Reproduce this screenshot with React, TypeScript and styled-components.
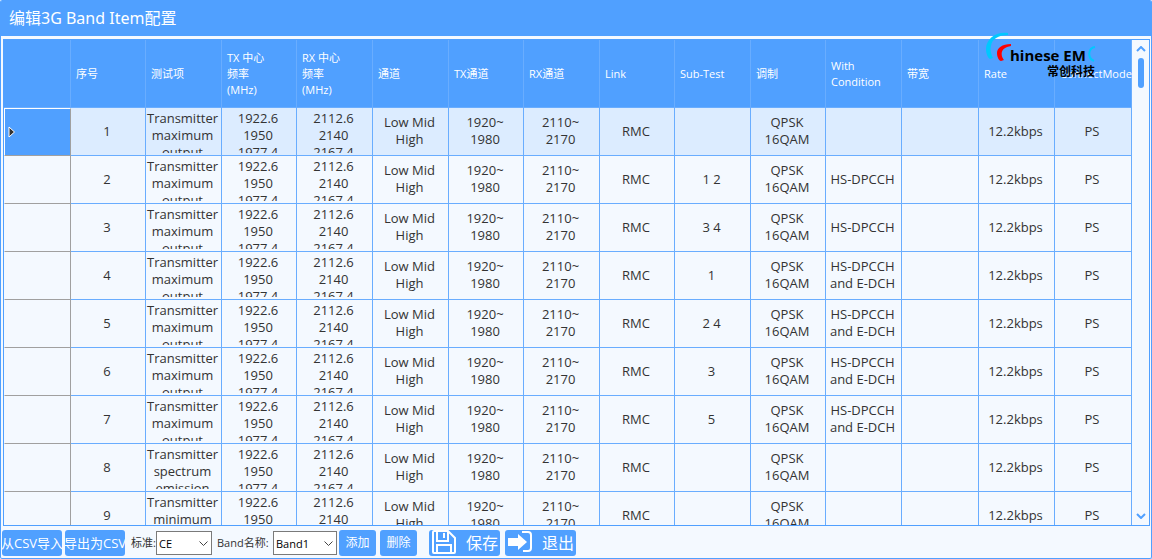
import React from 'react';
import styled, { createGlobalStyle } from 'styled-components';

const blue = '#50a0ff';
const line = '#69adff';
const pale = '#f4f9ff';

const GlobalStyle = createGlobalStyle`
  * { box-sizing: border-box; }
  body {
    margin: 0;
    font-family: "Open Sans", "Noto Sans CJK SC", sans-serif;
    color: #333;
  }
`;

const Window = styled.div`
  display: flex;
  flex-direction: column;
  height: 100vh;
  background: ${pale};
  border: 1px solid ${blue};
  border-top: 0;
  border-radius: 2px;
  overflow: hidden;
`;

const TitleBar = styled.header`
  flex: none;
  display: flex;
  align-items: center;
  height: 36px;
  margin: 0 -1px;
  padding: 0 9px 1px;
  background: ${blue};
`;

const Title = styled.h1`
  margin: 0;
  font-family: "Noto Sans", "Noto Sans CJK SC", sans-serif;
  font-size: 16px;
  line-height: 20px;
  font-weight: 400;
  color: #fff;
`;

const GridFrame = styled.main`
  position: relative;
  flex: 1;
  min-height: 0;
  display: flex;
  margin: 3px 1px 0 2px;
  border: 1px solid ${blue};
`;

const GridView = styled.div`
  flex: 1;
  min-width: 0;
  overflow: hidden;
`;

const Grid = styled.table`
  width: 100%;
  table-layout: fixed;
  border-collapse: separate;
  border-spacing: 0;
`;

const Col = styled.col<{ $w: number }>`
  width: ${(p) => p.$w}px;
`;

const HeadCell = styled.th`
  height: 68px;
  padding: 0 0 0 5px;
  background: ${blue};
  border-right: 1px solid ${line};
  border-bottom: 1px solid ${line};
  color: #fff;
  font-size: 11px;
  line-height: 16px;
  font-weight: 400;
  text-align: left;
  white-space: pre-line;
`;

const RowHead = styled.th<{ $current?: boolean }>`
  height: 48px;
  padding: 0 0 0 3px;
  text-align: left;
  background: ${(p) => (p.$current ? blue : pale)};
  border-right: 1px solid #a0a0a0;
  border-bottom: 1px solid #a0a0a0;
  border-left: 1px solid ${(p) => (p.$current ? '#fff' : pale)};
  border-top: ${(p) => (p.$current ? '1px solid #fff' : '0')};
`;

const Cell = styled.td<{ $current?: boolean }>`
  height: 48px;
  padding: 0 2px 1px 0;
  background: ${(p) => (p.$current ? '#dcecff' : pale)};
  border-right: 1px solid ${line};
  border-bottom: 1px solid ${line};
  font-size: 13px;
  line-height: 17px;
  text-align: center;
`;

const CellText = styled.div`
  max-height: 43px;
  overflow: hidden;
  white-space: pre-line;
`;

const ScrollBar = styled.div`
  flex: none;
  width: 17px;
  display: flex;
  flex-direction: column;
  align-items: center;
  background: ${pale};
`;

const ScrollButton = styled.button`
  display: flex;
  align-items: center;
  justify-content: center;
  width: 17px;
  height: 18px;
  padding: 0;
  border: 0;
  background: none;
`;

const Track = styled.div`
  flex: 1;
`;

const Thumb = styled.div`
  width: 6px;
  height: 30px;
  border-radius: 3px;
  background: ${blue};
`;

const Logo = styled.svg`
  position: absolute;
  top: -8px;
  right: 45px;
  width: 120px;
  height: 48px;
  pointer-events: none;
`;

const Footer = styled.footer`
  flex: none;
  display: flex;
  align-items: center;
  height: 32px;
  padding: 2px 1px 0;
`;

const Action = styled.button<{ $w: number; $size?: number; $gap?: number }>`
  flex: none;
  display: flex;
  align-items: center;
  justify-content: center;
  gap: 9px;
  width: ${(p) => p.$w}px;
  height: 26px;
  margin-right: ${(p) => p.$gap ?? 3}px;
  padding: 0;
  border: 0;
  border-radius: 3px;
  background: ${blue};
  color: #fff;
  font-family: inherit;
  font-size: ${(p) => p.$size ?? 13}px;
  line-height: 20px;
  white-space: nowrap;
  overflow: hidden;
`;

const Label = styled.label<{ $w: number }>`
  flex: none;
  width: ${(p) => p.$w}px;
  margin-left: 3px;
  font-size: 11px;
  line-height: 16px;
  white-space: nowrap;
`;

const Picker = styled.span<{ $w: number }>`
  position: relative;
  flex: none;
  width: ${(p) => p.$w}px;
  height: 24px;
  margin-right: 2px;
`;

const Select = styled.select`
  appearance: none;
  display: block;
  width: 100%;
  height: 24px;
  padding: 0 2px;
  border: 1px solid #7a7a7a;
  border-radius: 0;
  background: #fff;
  color: #000;
  font-family: inherit;
  font-size: 11px;
`;

const Chevron = styled.svg`
  position: absolute;
  top: 10px;
  right: 4px;
  pointer-events: none;
`;

const columns: [string, number][] = [
  ['', 67],
  ['序号', 75],
  ['测试项', 76],
  ['TX 中心\n频率\n(MHz)', 75],
  ['RX 中心\n频率\n(MHz)', 76],
  ['通道', 76],
  ['TX通道', 75],
  ['RX通道', 76],
  ['Link', 75],
  ['Sub-Test', 76],
  ['调制', 75],
  ['With\nCondition', 76],
  ['带宽', 77],
  ['Rate', 76],
  ['ConnectMode', 77],
];

const power = 'Transmitter\nmaximum\noutput';
const tests: [string, string, string][] = [
  [power, '', ''],
  [power, '1 2', 'HS-DPCCH'],
  [power, '3 4', 'HS-DPCCH'],
  [power, '1', 'HS-DPCCH\nand E-DCH'],
  [power, '2 4', 'HS-DPCCH\nand E-DCH'],
  [power, '3', 'HS-DPCCH\nand E-DCH'],
  [power, '5', 'HS-DPCCH\nand E-DCH'],
  ['Transmitter\nspectrum\nemission', '', ''],
  ['Transmitter\nminimum\noutput', '', ''],
];

const rows = tests.map(([item, sub, condition], i) => [
  String(i + 1),
  item,
  '1922.6\n1950\n1977.4',
  '2112.6\n2140\n2167.4',
  'Low Mid\nHigh',
  '1920~\n1980',
  '2110~\n2170',
  'RMC',
  sub,
  'QPSK\n16QAM',
  condition,
  '',
  '12.2kbps',
  'PS',
]);

function Arrow({ up }: { up?: boolean }) {
  return (
    <svg width="10" height="6" viewBox="0 0 10 6" fill="none" stroke={blue} strokeWidth="2">
      <path d={up ? 'M1 5l4-4 4 4' : 'M1 1l4 4 4-4'} />
    </svg>
  );
}

function SelectField({ id, width, options }: { id: string; width: number; options: string[] }) {
  return (
    <Picker $w={width}>
      <Select id={id}>
        {options.map((o) => (
          <option key={o}>{o}</option>
        ))}
      </Select>
      <Chevron width="9" height="6" viewBox="0 0 9 6" fill="none" stroke="#444">
        <path d="M0.5 0.5l4 4 4-4" />
      </Chevron>
    </Picker>
  );
}

export default function App() {
  return (
    <Window>
      <GlobalStyle />
      <TitleBar>
        <Title>编辑3G Band Item配置</Title>
      </TitleBar>
      <GridFrame>
        <GridView>
          <Grid>
            <colgroup>
              {columns.map(([name, w]) => (
                <Col key={name} $w={w} />
              ))}
            </colgroup>
            <thead>
              <tr>
                {columns.map(([name]) => (
                  <HeadCell key={name} scope="col">{name}</HeadCell>
                ))}
              </tr>
            </thead>
            <tbody>
              {rows.map((row, r) => (
                <tr key={row[0]}>
                  <RowHead scope="row" $current={r === 0}>
                    {r === 0 && (
                      <svg width="8" height="12" viewBox="0 0 8 12" aria-label="current row">
                        <path d="M1 1v10l5.500-5z" fill="#333" stroke="#fff" />
                      </svg>
                    )}
                  </RowHead>
                  {row.map((text, c) => (
                    <Cell key={c} $current={r === 0}>
                      <CellText>{text}</CellText>
                    </Cell>
                  ))}
                </tr>
              ))}
            </tbody>
          </Grid>
        </GridView>
        <ScrollBar>
          <ScrollButton aria-label="scroll up">
            <Arrow up />
          </ScrollButton>
          <Thumb />
          <Track />
          <ScrollButton aria-label="scroll down">
            <Arrow />
          </ScrollButton>
        </ScrollBar>
        <Logo viewBox="0 0 120 48">
          <path d="M24 1C12-1 2 7 2 17c0 5 2 9 4 10l3-1C7 22 6 18 7 14 8 7 14 3 24 3z" fill="#00c8ff" />
          <path d="M27 12C18 12 13 16 13 21c0 4 2 8 4 8l3-1C17 24 15 16 27 14z" fill="#f00" />
          <text x="26" y="29" fontSize="15" fontWeight="700" fill="#000">hinese EM</text>
          <path d="M111 15c-7 1-8 11-1 14" fill="none" stroke="#00c8ff" strokeWidth="2" />
          <text x="63" y="44" fontSize="12" fontWeight="700" fill="#000">常创科技</text>
        </Logo>
      </GridFrame>
      <Footer>
        <Action $w={60}>从CSV导入</Action>
        <Action $w={60}>导出为CSV</Action>
        <Label htmlFor="standard" $w={25}>标准:</Label>
        <SelectField id="standard" width={56} options={['CE']} />
        <Label htmlFor="band" $w={56}>Band名称:</Label>
        <SelectField id="band" width={64} options={['Band1']} />
        <Action $w={37} $size={12} $gap={4}>添加</Action>
        <Action $w={37} $size={12} $gap={12}>删除</Action>
        <Action $w={71} $size={16} $gap={5}>
          <svg width="26" height="26" viewBox="0 0 26 26" fill="none" stroke="#fff" strokeWidth="2">
            <path d="M17 1H3Q2 1 2 2v20q0 1 1 1h20q1 0 1-1V8z" />
            <path d="M6 1v10h11V1M6 23v-8h14v8" />
            <path d="M13 3v5" />
          </svg>
          保存
        </Action>
        <Action $w={71} $size={16}>
          <svg width="26" height="26" viewBox="0 0 26 26">
            <path d="M1 8h10V4l9 8-9 8v-4H1z" fill="#fff" />
            <path d="M15 2h6q3 0 3 3v13q0 3-3 3h-5" fill="none" stroke="#fff" strokeWidth="2" />
          </svg>
          退出
        </Action>
      </Footer>
    </Window>
  );
}
